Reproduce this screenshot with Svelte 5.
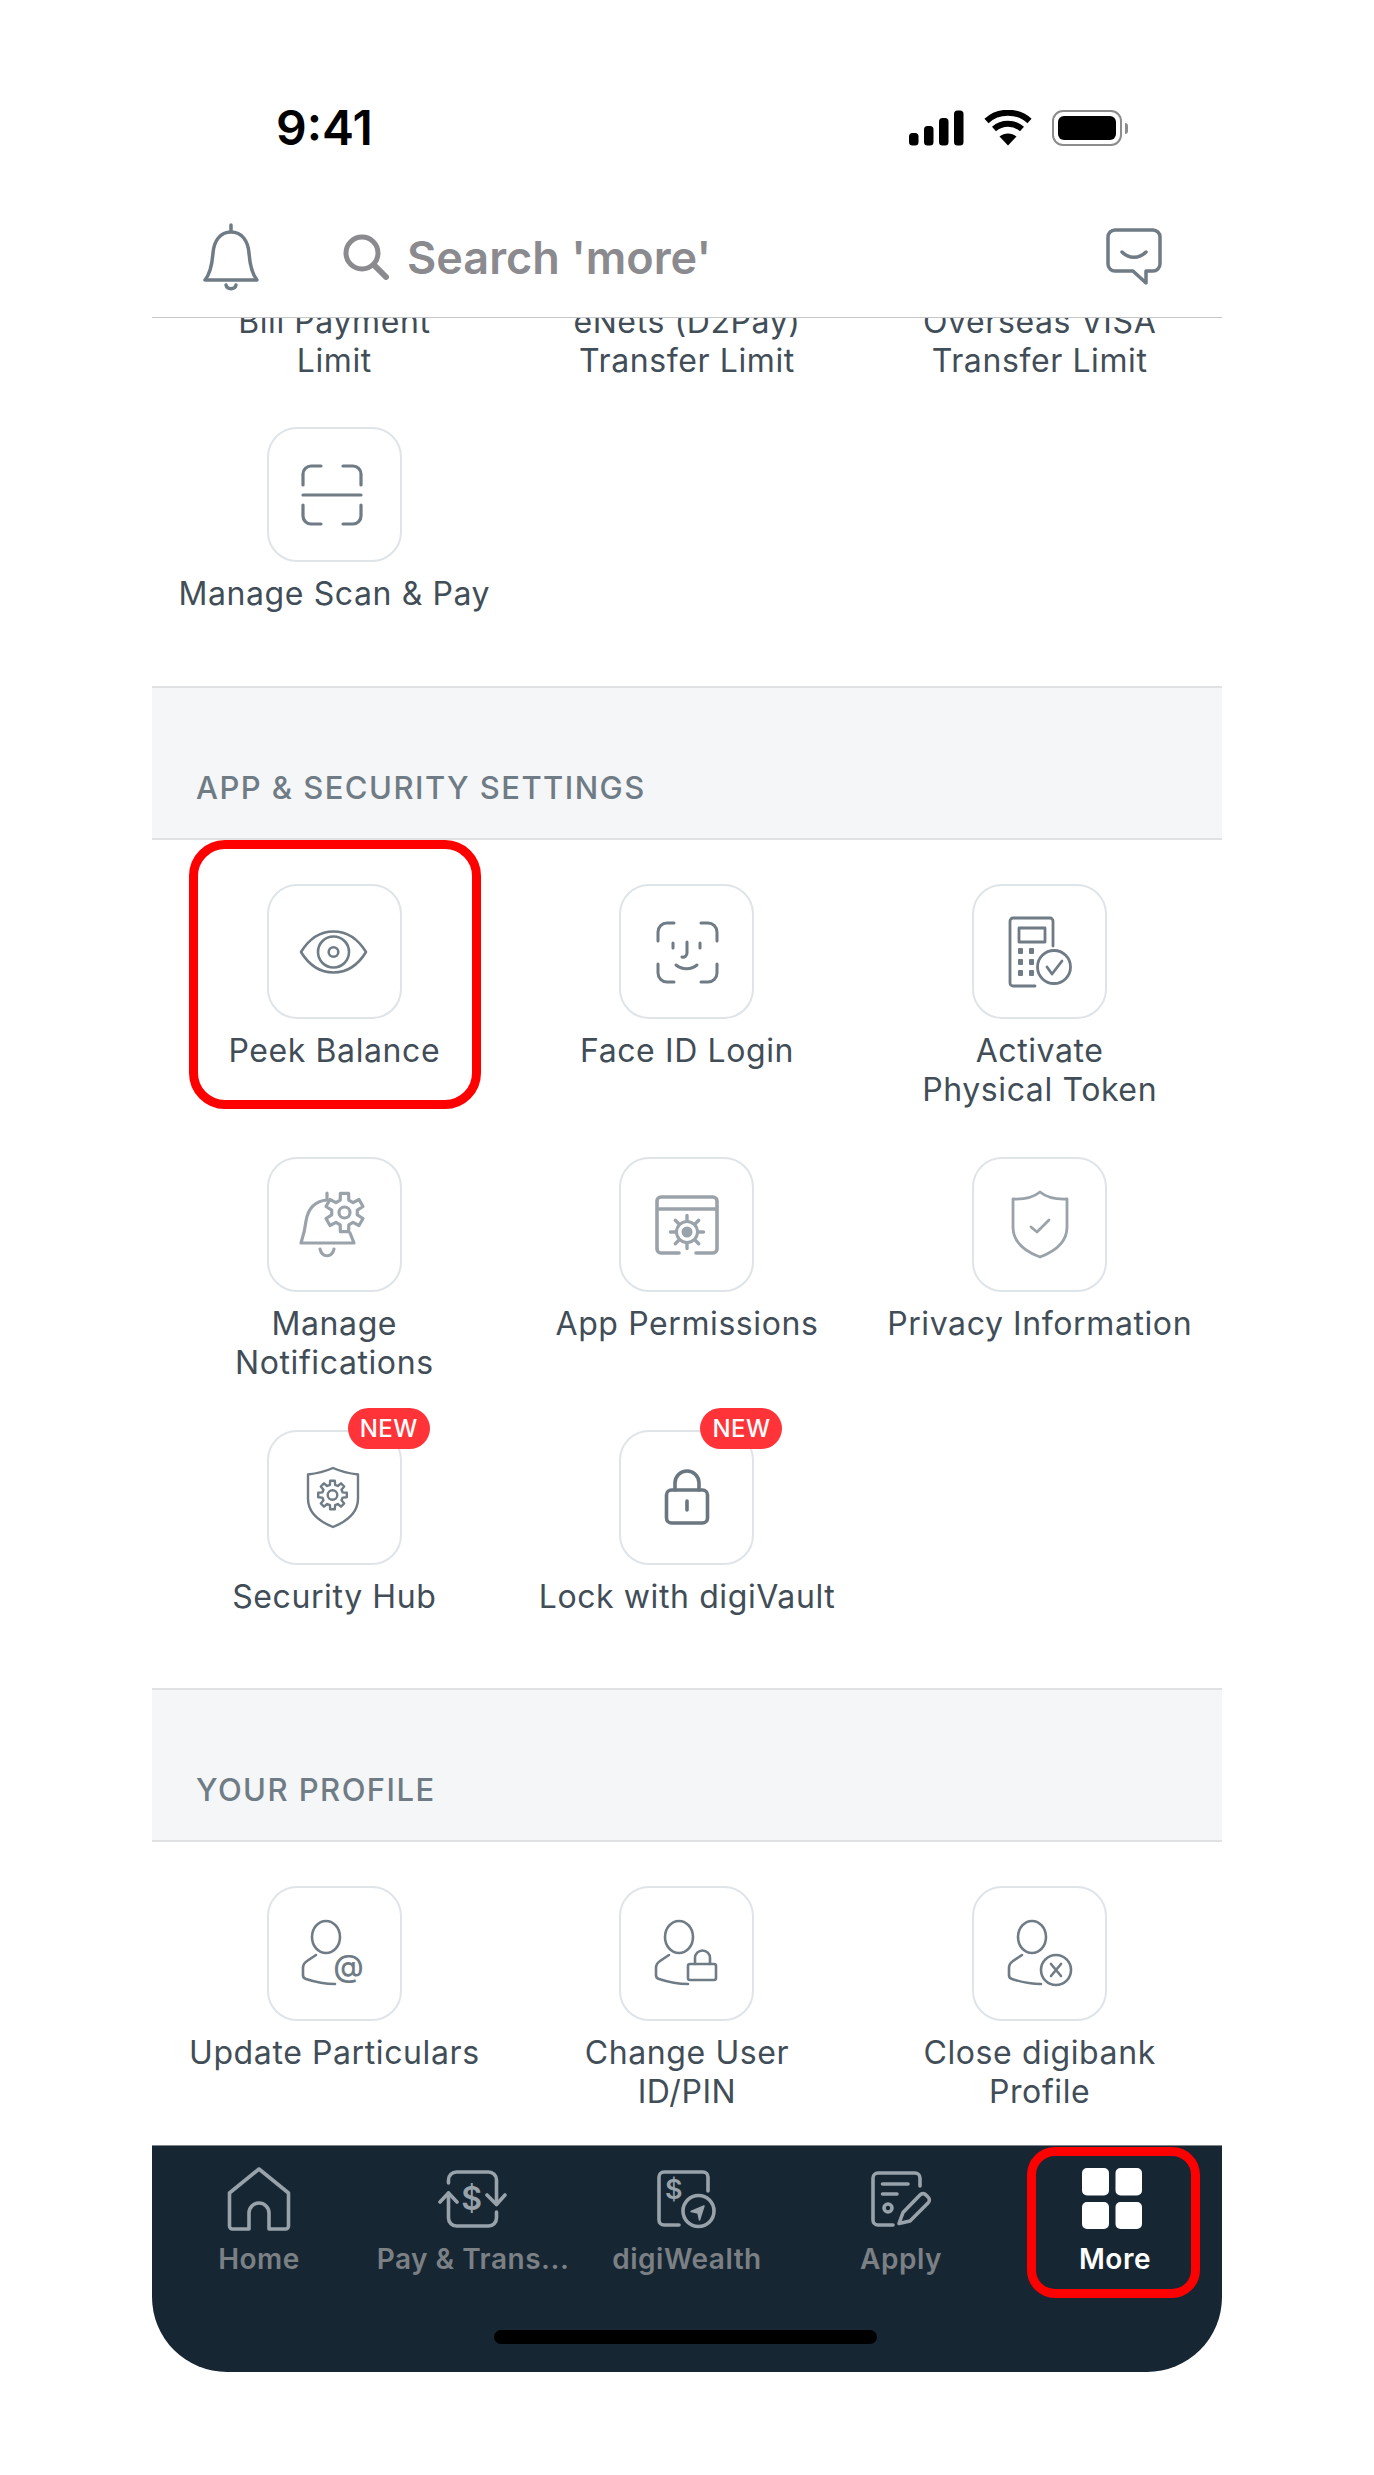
<script>
  function gear(cx, cy, outer, inner, teeth) {
    const pts = [];
    const step = (Math.PI * 2) / teeth;
    for (let i = 0; i < teeth; i++) {
      const a = i * step - Math.PI / 2;
      const w = step * 0.2;
      const p = (r, t) => `${(cx + r * Math.cos(t)).toFixed(1)} ${(cy + r * Math.sin(t)).toFixed(1)}`;
      pts.push(`${i ? 'L' : 'M'}${p(inner, a - w * 1.6)}`);
      pts.push(`L${p(outer, a - w)}`);
      pts.push(`L${p(outer, a + w)}`);
      pts.push(`L${p(inner, a + w * 1.6)}`);
    }
    return pts.join(' ') + 'Z';
  }

  // short radial strokes round a ring, for the smaller sprocket
  function spokes(cx, cy, from, to, count) {
    let d = '';
    for (let i = 0; i < count; i++) {
      const a = (i * Math.PI * 2) / count - Math.PI / 2;
      const x = Math.cos(a);
      const y = Math.sin(a);
      d += `M${(cx + from * x).toFixed(1)} ${(cy + from * y).toFixed(1)}L${(cx + to * x).toFixed(1)} ${(cy + to * y).toFixed(1)}`;
    }
    return d;
  }

  const limits = [
    { label: ['Bill Payment', 'Limit'] },
    { label: ['eNets (D2Pay)', 'Transfer Limit'] },
    { label: ['Overseas VISA', 'Transfer Limit'] }
  ];

  const settings = [
    { icon: 'eye', label: ['Peek Balance'] },
    { icon: 'face', label: ['Face ID Login'] },
    { icon: 'token', label: ['Activate', 'Physical Token'] },
    { icon: 'notify', label: ['Manage', 'Notifications'] },
    { icon: 'perms', label: ['App Permissions'] },
    { icon: 'privacy', label: ['Privacy Information'] },
    { icon: 'hub', label: ['Security Hub'], badge: true },
    { icon: 'lock', label: ['Lock with digiVault'], badge: true }
  ];

  const profile = [
    { icon: 'at', label: ['Update Particulars'] },
    { icon: 'userlock', label: ['Change User', 'ID/PIN'] },
    { icon: 'userx', label: ['Close digibank', 'Profile'] }
  ];

  const tabs = [
    { id: 'home', label: 'Home' },
    { id: 'pay', label: 'Pay & Trans...' },
    { id: 'wealth', label: 'digiWealth' },
    { id: 'apply', label: 'Apply' },
    { id: 'more', label: 'More', active: true }
  ];
</script>

{#snippet tileIcon(name)}
  <svg class="glyph" viewBox="0 0 135 135" fill="none" stroke-linecap="round" stroke-linejoin="round">
    {#if name === 'scan'}
      <g stroke="#6f7b85" stroke-width="3.2">
        <path d="M37 58V47a8 8 0 0 1 8-8h10M77 39h10a8 8 0 0 1 8 8v11M37 78v11a8 8 0 0 0 8 8h10M77 97h10a8 8 0 0 0 8-8V78M37 68h58" />
      </g>
    {:else if name === 'eye'}
      <g stroke="#6f7b85" stroke-width="2.6">
        <path d="M35 68C43 55 54 47.5 67.5 47.5S92 55 100 68C92 81 81 88.5 67.5 88.5S43 81 35 68Z" />
        <circle cx="67.5" cy="68" r="15.5" />
        <circle cx="67.5" cy="68" r="4.8" />
      </g>
    {:else if name === 'face'}
      <g stroke="#6f7b85" stroke-width="3">
        <path d="M39 57V48a9 9 0 0 1 9-9h7M82 39h7a9 9 0 0 1 9 9v9M39 80v9a9 9 0 0 0 9 9h7M82 98h7a9 9 0 0 0 9-9v-9" />
        <path d="M54 59v5M81 59v5M68 58v11a4 4 0 0 1-5 4M57 81c6 5 15 5 21 0" />
      </g>
    {:else if name === 'token'}
      <g stroke="#6f7b85" stroke-width="2.8">
        <path d="M81 62V37a3 3 0 0 0-3-3H41a3 3 0 0 0-3 3v62a3 3 0 0 0 3 3h22" />
        <rect x="47" y="44" width="26" height="14" />
        <circle cx="82" cy="83" r="16.5" />
        <path d="M75 83l5 7 10-13" />
      </g>
      <g fill="#6f7b85">
        <rect x="46" y="64" width="5" height="6" rx="1" /><rect x="57" y="64" width="5" height="6" rx="1" />
        <rect x="46" y="75" width="5" height="6" rx="1" /><rect x="57" y="75" width="5" height="6" rx="1" />
        <rect x="46" y="86" width="5" height="6" rx="1" /><rect x="57" y="86" width="5" height="6" rx="1" />
      </g>
    {:else if name === 'notify'}
      <g stroke="#9aa3aa" stroke-width="3.2">
        <path d="M61 36v7C49 44 42 52 40 64c-1 9-3 16-5 22h53l-4-10" />
        <path d="M54 92c2 9 12 9 14 0" />
        <path d={gear(78.5, 55.5, 19.5, 13, 6)} />
        <circle cx="78.5" cy="55.5" r="5.5" />
      </g>
    {:else if name === 'perms'}
      <g stroke="#9aa3aa" stroke-width="3.6">
        <path d="M60 96H42a4 4 0 0 1-4-4V44a4 4 0 0 1 4-4h52a4 4 0 0 1 4 4v48a4 4 0 0 1-4 4H77M38 52h60" />
        <circle cx="68" cy="75" r="10.500" stroke-width="3" />
        <path stroke-width="3.4" d={spokes(68, 75, 12, 16.5, 8)} />
      </g>
      <circle cx="68" cy="75" r="5.500" fill="#9aa3aa" />
    {:else if name === 'privacy'}
      <g stroke="#9aa3aa" stroke-width="2.8">
        <path d="M68 35c6 5 16 7.500 27 7v28c0 14-11 24-27 30-16-6-27-16-27-30V42c11 .5 21-2 27-7Z" />
        <path d="M59 70l6 5 12-12" />
      </g>
    {:else if name === 'hub'}
      <g stroke="#6f7b85" stroke-width="2.4">
        <path d="M67 38c8 3.500 16 5.500 25 6.500v24C92 82 82 91 67 97 52 91 42 82 42 68.500v-24c9-1 17-3 25-6.500Z" />
        <path d={gear(66.5, 65, 14.5, 10.5, 8)} />
        <circle cx="66.5" cy="65" r="4.8" />
      </g>
    {:else if name === 'lock'}
      <g stroke="#6a7680" stroke-width="3.6">
        <rect x="47.500" y="60" width="41" height="33" rx="5" />
        <path d="M56 60V53a12 12 0 0 1 24 0v7M68 71v9" />
      </g>
    {:else}
      <g stroke="#6f7b85" stroke-width="2.6">
        <ellipse cx="60" cy="51" rx="14" ry="16" />
        <path d="M50 69l-9 6c-3 2-4 4-4 7v7c0 2 1 3.500 3 4 9 3 18 5 29 5" />
        {#if name === 'userlock'}
          <rect x="69" y="78" width="28" height="16" rx="2" />
          <path d="M76 78v-6a7.500 7.500 0 0 1 15 0v6" />
        {:else if name === 'userx'}
          <circle cx="84" cy="84" r="15" />
          <path d="M79 78l10 12M89 78l-10 12" />
        {/if}
      </g>
      {#if name === 'at'}
        <text class="at" x="82.500" y="91" text-anchor="middle">@</text>
      {/if}
    {/if}
  </svg>
{/snippet}

{#snippet tile(item)}
  <div class="cell">
    <div class="tile">
      {#if item.icon}{@render tileIcon(item.icon)}{/if}
      {#if item.badge}<span class="badge">NEW</span>{/if}
    </div>
    <div class="cell-label">
      {#each item.label as line}<div>{line}</div>{/each}
    </div>
  </div>
{/snippet}

<div class="phone">
  <div class="status">
    <span class="time">9:41</span>
    <div class="status-icons">
      <svg width="55" height="36" viewBox="0 0 55 36" fill="#000">
        <rect x="0" y="23" width="9.500" height="12.500" rx="3.500" />
        <rect x="15" y="16" width="9.500" height="19.500" rx="3.500" />
        <rect x="30" y="8" width="9.500" height="27.500" rx="3.500" />
        <rect x="45" y="0.500" width="9.500" height="35" rx="3.500" />
      </svg>
      <svg class="wifi" width="48" height="36" viewBox="0 0 48 36" fill="none" stroke="#000" stroke-width="6">
        <path d="M2.500 11C14 0 34 0 45.500 11" />
        <path d="M10 19c8-7 20-7 28 0" />
        <path d="M24 35.500L15.500 26.500c5-4 12-4 17 0Z" fill="#000" stroke="none" />
      </svg>
      <div class="battery"><div class="battery-fill"></div></div>
      <div class="battery-nub"></div>
    </div>
  </div>

  <div class="topbar">
    <svg class="bell" width="56" height="68" viewBox="0 0 56 68" fill="none" stroke="#6f7b85" stroke-width="3.500" stroke-linecap="round" stroke-linejoin="round">
      <path d="M28 2v7M28 9C17 9 11 18 10 30c-1 13-3 21-8 27h52c-5-6-7-14-8-27C45 18 39 9 28 9Z" />
      <path d="M23 62c1 5 9 5 10 0" />
    </svg>
    <div class="search">
      <svg width="46" height="46" viewBox="0 0 46 46" fill="none" stroke="#8a8a8f" stroke-width="5" stroke-linecap="round">
        <circle cx="19" cy="19" r="16" />
        <path d="M31 31l12 12" stroke-width="6" />
      </svg>
      <span>Search 'more'</span>
    </div>
    <svg class="chat" width="56" height="58" viewBox="0 0 56 58" fill="none" stroke="#6f7b85" stroke-width="3.500" stroke-linecap="round" stroke-linejoin="round">
      <path d="M9 2h38a7 7 0 0 1 7 7v27a7 7 0 0 1-7 7H40v12L27 43H9a7 7 0 0 1-7-7V9a7 7 0 0 1 7-7Z" />
      <path d="M16 24c7 7 17 7 24 0" />
    </svg>
  </div>

  <div class="scroll">
    <div class="scroll-inner">
      <div class="grid limits">
        {#each limits as item}{@render tile(item)}{/each}
        <div class="cell">
          <div class="tile">{@render tileIcon('scan')}</div>
          <div class="cell-label">Manage Scan &amp; Pay</div>
        </div>
      </div>

      <div class="section-head">APP &amp; SECURITY SETTINGS</div>
      <div class="grid settings">
        {#each settings as item}{@render tile(item)}{/each}
      </div>

      <div class="section-head">YOUR PROFILE</div>
      <div class="grid">
        {#each profile as item}{@render tile(item)}{/each}
      </div>
    </div>
    <div class="mark peek-mark"></div>
  </div>

  <nav class="tabbar">
    {#each tabs as tab}
      <div class="tab" class:active={tab.active}>
        <svg width="70" height="65" viewBox="0 0 70 65" fill="none" stroke="#98a2aa" stroke-width="3.600" stroke-linecap="round" stroke-linejoin="round">
          {#if tab.id === 'home'}
            <path d="M35 3L5.500 27v33a3 3 0 0 0 3 3H25V47a10 10 0 0 1 20 0v16h16.500a3 3 0 0 0 3-3V27Z" />
          {:else if tab.id === 'pay'}
            <path d="M10.500 17V14a8 8 0 0 1 8-8h32a8 8 0 0 1 8 8v24M58.500 46v6a8 8 0 0 1-8 8h-32a8 8 0 0 1-8-8V27" />
            <path d="M2 36l8.500-9 8.500 9M49 29l9.500 9.500L67 29" />
            <text class="dollar" x="34" y="44" text-anchor="middle">$</text>
          {:else if tab.id === 'wealth'}
            <path d="M27 59H12a5 5 0 0 1-5-5V11a5 5 0 0 1 5-5h39a5 5 0 0 1 5 5v14" />
            <circle cx="46.500" cy="45" r="15.500" />
            <path d="M52 40l-13 5.500 7 1.500 1.500 7Z" fill="#98a2aa" stroke-width="1.500" />
            <text class="dollar small" x="22" y="33" text-anchor="middle">$</text>
          {:else if tab.id === 'apply'}
            <path d="M27 59H12a5 5 0 0 1-5-5V12a5 5 0 0 1 5-5h37a5 5 0 0 1 5 5v8" />
            <path d="M16.500 18H42M16.500 28H31" />
            <circle cx="22" cy="42" r="4" />
            <path d="M33 57.500l4-11 17-17.500a4 4 0 0 1 6 0l2 2a4 4 0 0 1 0 6L44 55Z" />
          {:else}
            <g fill="#fff" stroke="none">
              <rect x="2" y="2" width="27" height="27.500" rx="5" />
              <rect x="35.500" y="2" width="26.500" height="27.500" rx="5" />
              <rect x="2" y="36" width="27" height="27" rx="5" />
              <rect x="35.500" y="36" width="26.500" height="27" rx="5" />
            </g>
          {/if}
        </svg>
        <span>{tab.label}</span>
      </div>
    {/each}
    <div class="home-indicator"></div>
    <div class="mark more-mark"></div>
  </nav>
</div>

<style>
  :global(body) {
    margin: 0;
    background: #fff;
    font-family: Inter, "Liberation Sans", sans-serif;
  }

  .phone {
    position: relative;
    width: 1070px;
    height: 2372px;
    margin-left: 152px;
    display: flex;
    flex-direction: column;
    background: #fff;
  }

  .status {
    height: 94px;
    padding: 102px 94px 0 124px;
    display: flex;
    justify-content: space-between;
    align-items: flex-start;
    box-sizing: content-box;
  }

  .time {
    font-size: 48px;
    line-height: 52px;
    font-weight: 600;
    color: #000;
  }

  .status-icons {
    margin-top: 8px;
    display: flex;
    align-items: center;
    gap: 20px;
  }

  .battery {
    width: 70px;
    height: 36px;
    box-sizing: border-box;
    border: 2px solid #8c8c8c;
    border-radius: 11px;
    padding: 4px;
  }

  .battery-fill {
    height: 100%;
    background: #000;
    border-radius: 6px;
  }

  .battery-nub {
    width: 3px;
    height: 11px;
    margin-left: -17px;
    background: #8c8c8c;
    border-radius: 0 3px 3px 0;
  }

  .topbar {
    height: 122px;
    flex-shrink: 0;
    display: flex;
    align-items: center;
    padding: 0 60px 0 51px;
    border-bottom: 1px solid #c4c6c8;
    box-sizing: border-box;
  }

  .search {
    flex: 1;
    display: flex;
    align-items: center;
    gap: 18px;
    margin-left: 84px;
    font-size: 45px;
    font-weight: 600;
    color: #8a8a8f;
  }

  .search span {
    position: relative;
    top: 1px;
  }

  .scroll {
    flex: 1;
    overflow: hidden;
    position: relative;
  }

  .scroll-inner {
    margin-top: -163px;
  }

  .grid {
    display: grid;
    grid-template-columns: repeat(3, 1fr);
    row-gap: 48px;
    padding: 0 6px 73px;
  }

  .grid.limits {
    row-gap: 47px;
  }

  .grid.settings {
    padding-bottom: 72px;
  }

  .section-head + .grid {
    padding-top: 44px;
  }

  .cell {
    display: flex;
    flex-direction: column;
    align-items: center;
  }

  .tile {
    position: relative;
    width: 135px;
    height: 135px;
    box-sizing: border-box;
    border: 2.500px solid #dfe4e8;
    border-radius: 30px;
    background: #fff;
  }

  .glyph {
    position: absolute;
    inset: -2.500px;
    width: 135px;
    height: 135px;
  }

  .at {
    font-size: 31px;
    font-weight: 500;
    fill: #6f7b85;
    stroke: none;
  }

  .cell-label {
    margin-top: 12px;
    min-height: 39px;
    font-size: 32px;
    line-height: 39px;
    letter-spacing: 0.6px;
    color: #414d57;
    text-align: center;
    white-space: nowrap;
  }

  .badge {
    position: absolute;
    top: -24px;
    right: -30px;
    width: 82px;
    height: 41px;
    border-radius: 21px;
    background: #ff3338;
    color: #fff;
    font-size: 24px;
    font-weight: 500;
    line-height: 41px;
    letter-spacing: 0.5px;
    text-align: center;
  }

  .section-head {
    height: 154px;
    box-sizing: border-box;
    padding: 0 44px 31px;
    display: flex;
    align-items: flex-end;
    background: #f5f6f8;
    border-top: 2px solid #dfe1e3;
    border-bottom: 2px solid #dfe1e3;
    font-size: 31px;
    line-height: 38px;
    letter-spacing: 1.45px;
    font-weight: 500;
    color: #6f7b85;
  }

  .tabbar {
    position: relative;
    flex-shrink: 0;
    height: 227px;
    padding-top: 20px;
    box-sizing: border-box;
    display: flex;
    align-items: flex-start;
    background: #172633;
    border-top: 1px solid #7d858b;
    border-radius: 0 0 75px 75px;
  }

  .tab {
    flex: 1;
    min-width: 0;
    display: flex;
    flex-direction: column;
    align-items: center;
    gap: 12px;
    font-size: 28px;
    line-height: 32px;
    letter-spacing: 0.5px;
    font-weight: 600;
    color: #7b8084;
    white-space: nowrap;
  }

  .tab.active {
    color: #fff;
  }

  .dollar {
    font-size: 32px;
    font-weight: 600;
    fill: #98a2aa;
    stroke: none;
  }

  .dollar.small {
    font-size: 27px;
  }

  .home-indicator {
    position: absolute;
    left: 342px;
    bottom: 28px;
    width: 383px;
    height: 14px;
    border-radius: 7px;
    background: #000;
  }

  /* red callouts drawn over the items they highlight */
  .mark {
    position: absolute;
    box-sizing: border-box;
    border: 9px solid #ff0000;
    pointer-events: none;
  }

  .peek-mark {
    left: 37px;
    top: 522px;
    width: 292px;
    height: 269px;
    border-radius: 36px;
  }

  .more-mark {
    left: 875px;
    top: 1px;
    width: 173px;
    height: 151px;
    border-radius: 28px;
  }
</style>
